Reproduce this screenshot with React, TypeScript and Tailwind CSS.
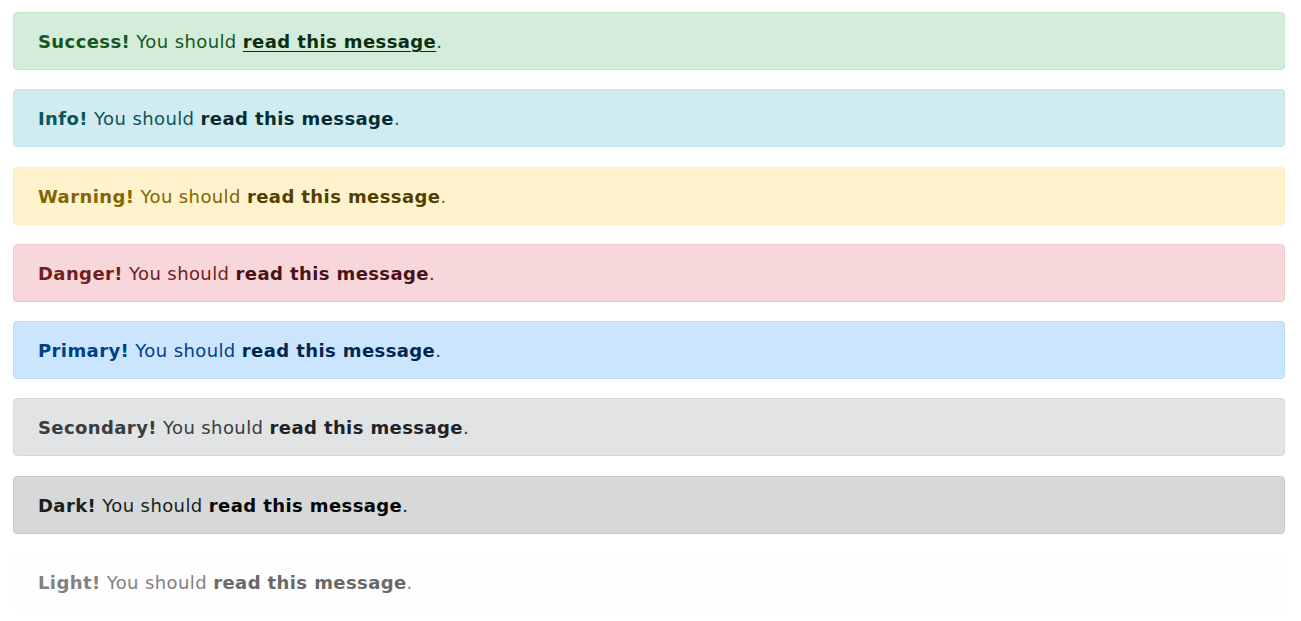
import React from "react";

const alerts = [
  { label: "Success!", bg: "bg-[#d4edda]", border: "border-[#c3e6cb]", text: "text-[#155724]", link: "text-[#0b2e13]", underline: true },
  { label: "Info!", bg: "bg-[#d1ecf1]", border: "border-[#bee5eb]", text: "text-[#0c5460]", link: "text-[#062c33]", underline: false },
  { label: "Warning!", bg: "bg-[#fff3cd]", border: "border-[#ffeeba]", text: "text-[#856404]", link: "text-[#533f03]", underline: false },
  { label: "Danger!", bg: "bg-[#f8d7da]", border: "border-[#f5c6cb]", text: "text-[#721c24]", link: "text-[#491217]", underline: false },
  { label: "Primary!", bg: "bg-[#cce5ff]", border: "border-[#b8daff]", text: "text-[#004085]", link: "text-[#002752]", underline: false },
  { label: "Secondary!", bg: "bg-[#e2e3e5]", border: "border-[#d6d8db]", text: "text-[#383d41]", link: "text-[#202326]", underline: false },
  { label: "Dark!", bg: "bg-[#d6d8d9]", border: "border-[#c6c8ca]", text: "text-[#1b1e21]", link: "text-[#040505]", underline: false },
  { label: "Light!", bg: "bg-[#fefefe]", border: "border-[#fdfdfe]", text: "text-[#818182]", link: "text-[#686868]", underline: false },
];

export default function App() {
  return (
    <div className="w-[1301px] h-[621px] bg-white pt-[12px] pl-[13px] pr-[16px] flex flex-col gap-[19.3px]" style={{ fontFamily: '"DejaVu Sans", Verdana, sans-serif' }}>
      {alerts.map((a) => (
        <div key={a.label} className={`h-[58px] shrink-0 flex items-center px-[24px] border rounded-[4px] text-[18px] tracking-[0.4px] ${a.bg} ${a.border} ${a.text}`}>
          <span className="pt-[1px]">
            <strong className="font-bold">{a.label}</strong> You should{" "}
            <a href="#" className={`font-bold ${a.link} ${a.underline ? "underline underline-offset-[3px]" : "no-underline"}`}>read this message</a>.
          </span>
        </div>
      ))}
    </div>
  );
}
